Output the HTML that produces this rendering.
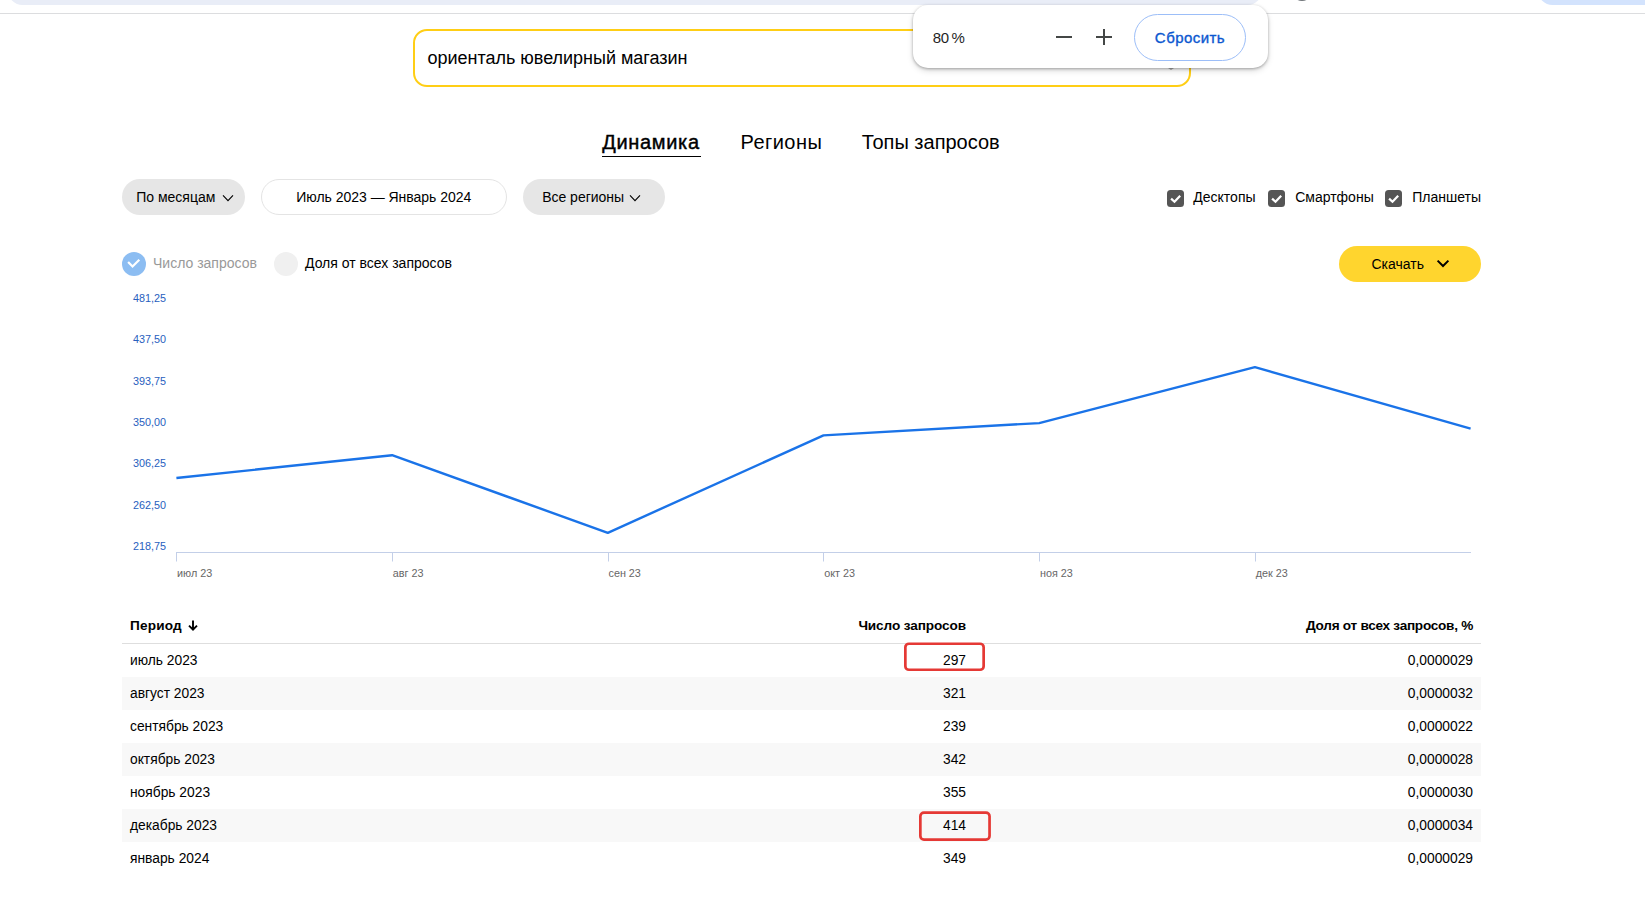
<!DOCTYPE html>
<html lang="ru">
<head>
<meta charset="utf-8">
<title>Подбор слов — ориенталь ювелирный магазин</title>
<style>
*{box-sizing:border-box;margin:0;padding:0}
html,body{width:1645px;height:898px;overflow:hidden;background:#fff}
body{position:relative;font-family:"Liberation Sans",sans-serif;color:#000}
.abs{position:absolute;white-space:nowrap}
/* browser chrome remnants */
.omnibox{left:8px;top:-24px;width:1254px;height:29px;border-radius:15px;background:#e9edf7}
.avatar{left:1292px;top:-18.6px;width:20px;height:20px;border-radius:50%;background:#70757a}
.chip{left:1538px;top:-24px;width:130px;height:28.5px;border-radius:15px;background:#d3e3fd}
.topline{left:0;top:13px;width:1645px;height:1px;background:#dcdddf}
/* search */
.search{left:413px;top:29px;width:778px;height:58px;border:2px solid #ffce15;border-radius:14px;background:#fff;
  font-size:18px;line-height:54px;padding-left:12.6px;letter-spacing:-0.02px}
/* zoom bubble */
.zoom{left:912.5px;top:5.4px;width:355px;height:63px;border-radius:15px;background:#fff;
  box-shadow:0 1px 3px rgba(0,0,0,.30),0 3px 6px rgba(0,0,0,.13)}
.zoom .pct{left:20.3px;top:.4px;font-size:15px;line-height:63.5px;color:#1f1f1f;letter-spacing:-.4px;word-spacing:-1px}
.zoom .minus{left:143.5px;top:30.5px;width:16px;height:2.6px;background:#444746}
.zoom .plus-h{left:183.5px;top:30.5px;width:16px;height:2.6px;background:#444746}
.zoom .plus-v{left:190.2px;top:23.8px;width:2.6px;height:16px;background:#444746}
.zoom .reset{left:221.5px;top:9px;width:112px;height:47px;border:1px solid #9cbef8;border-radius:24px;
  color:#0b57d0;font-size:15px;text-align:center;line-height:46.4px;-webkit-text-stroke:.35px #0b57d0;letter-spacing:.45px}
/* tabs */
.tab{font-size:20px;line-height:24px;top:130px}
.tab.active{-webkit-text-stroke:.42px #000;border-bottom:0}
.tabline{left:602px;top:156px;width:99px;height:1.4px;background:#000}
/* filter buttons */
.btn{top:179px;height:36px;border-radius:18px;background:#e6e6e6;font-size:14px;line-height:36px;letter-spacing:-.02px}
.btn.outline{background:#fff;border:1px solid #e4e4e4;line-height:34px}
.chev{display:inline-block;vertical-align:middle}
/* device checkboxes */
.cb{top:190px;width:17px;height:17px;border-radius:3.5px;background:#555}
.cbl{top:187.3px;font-size:14px;line-height:20px}
/* mode toggles */
.dot{top:252px;width:24px;height:24px;border-radius:50%}
.ml{top:253.2px;font-size:14px;line-height:20px}
/* download */
.dl{left:1339px;top:246px;width:142px;height:36px;border-radius:18px;background:#ffd52e;font-size:14px;line-height:36px}
/* table */
table{position:absolute;left:122px;top:611px;width:1359px;border-collapse:separate;border-spacing:0;table-layout:fixed;font-size:13.8px}
th{height:33px;padding-bottom:3.5px!important;font-weight:700;font-size:13.6px;text-align:right;border-bottom:1px solid #dedede;padding:0 8px;vertical-align:middle}
td{height:33px;text-align:right;padding:0 8px;vertical-align:middle;padding-top:.6px}
th:first-child,td:first-child{text-align:left}
tbody tr:nth-child(even){background:#f8f8f8}
</style>
</head>
<body>
<div class="abs omnibox"></div><div class="abs avatar"></div><div class="abs chip"></div><div class="abs topline"></div>

<div class="abs search">ориенталь ювелирный магазин</div>

<i class="abs" style="left:1167.8px;top:68.4px;width:0;height:0;border-left:3px solid transparent;border-right:3px solid transparent;border-top:2.6px solid #aaa"></i>
<div class="abs zoom">
  <span class="abs pct">80 %</span>
  <i class="abs minus"></i><i class="abs plus-h"></i><i class="abs plus-v"></i>
  <div class="abs reset">Сбросить</div>
</div>

<div class="abs tab active" style="left:602.2px;letter-spacing:.68px">Динамика</div>
<div class="abs tabline"></div>
<div class="abs tab" style="left:740.5px;letter-spacing:.45px">Регионы</div>
<div class="abs tab" style="left:861.8px;letter-spacing:0">Топы запросов</div>

<div class="abs btn" style="left:122px;width:123px;padding-left:14.3px">По месяцам<svg class="chev" style="margin-left:6.5px" width="12" height="8" viewBox="0 0 12 8"><path d="M1 1.3 6 6.6 11 1.3" fill="none" stroke="#000" stroke-width="1.1"/></svg></div>
<div class="abs btn outline" style="left:261px;width:245.6px;text-align:center">Июль 2023 — Январь 2024</div>
<div class="abs btn" style="left:523px;width:142px;padding-left:19.2px">Все регионы<svg class="chev" style="margin-left:5px" width="12" height="8" viewBox="0 0 12 8"><path d="M1 1.3 6 6.6 11 1.3" fill="none" stroke="#000" stroke-width="1.1"/></svg></div>

<div class="abs cb" style="left:1167px"><svg width="17" height="17" viewBox="0 0 17 17"><path d="M4.1 8.6 7.5 11.8 13.2 5.7" fill="none" stroke="#fff" stroke-width="2.2"/></svg></div>
<div class="abs cbl" style="left:1193.3px">Десктопы</div>
<div class="abs cb" style="left:1268px"><svg width="17" height="17" viewBox="0 0 17 17"><path d="M4.1 8.6 7.5 11.8 13.2 5.7" fill="none" stroke="#fff" stroke-width="2.2"/></svg></div>
<div class="abs cbl" style="left:1295.2px">Смартфоны</div>
<div class="abs cb" style="left:1385px"><svg width="17" height="17" viewBox="0 0 17 17"><path d="M4.1 8.6 7.5 11.8 13.2 5.7" fill="none" stroke="#fff" stroke-width="2.2"/></svg></div>
<div class="abs cbl" style="left:1412.3px">Планшеты</div>

<div class="abs dot" style="left:122px;background:#8cbdf2"><svg width="24" height="24" viewBox="0 0 24 24"><path d="M6.1 9.9 10.55 14.5 17.3 7.8" fill="none" stroke="#fff" stroke-width="2.2"/></svg></div>
<div class="abs ml" style="left:153px;color:#999">Число запросов</div>
<div class="abs dot" style="left:274px;background:#f0f0f0"></div>
<div class="abs ml" style="left:305px">Доля от всех запросов</div>

<div class="abs dl"><span class="abs" style="left:32.5px">Скачать</span><svg class="abs" style="left:97px;top:13px" width="14" height="10" viewBox="0 0 14 10"><path d="M1.6 1.6 7 7 12.4 1.6" fill="none" stroke="#000" stroke-width="2"/></svg></div>

<svg class="abs" style="left:0;top:285px" width="1645" height="310" viewBox="0 285 1645 310" font-family="Liberation Sans, sans-serif">
  <g font-size="10.8" fill="#2760be" text-anchor="end">
    <text x="166" y="301.8">481,25</text>
    <text x="166" y="343.2">437,50</text>
    <text x="166" y="384.6">393,75</text>
    <text x="166" y="426">350,00</text>
    <text x="166" y="467.4">306,25</text>
    <text x="166" y="508.8">262,50</text>
    <text x="166" y="550.2">218,75</text>
  </g>
  <path d="M176 552.5H1471M176.5 552v9.5M392.5 552v9.5M608.5 552v9.5M823.5 552v9.5M1039.5 552v9.5M1255.5 552v9.5" stroke="#c3cfe8" stroke-width="1" fill="none"/>
  <polyline points="176.4,478 392.1,455.2 607.8,532.8 823.5,435.4 1039.2,423.1 1254.9,367.2 1470.6,428.7" fill="none" stroke="#1a73e8" stroke-width="2.4" stroke-linejoin="round"/>
  <g font-size="10.8" fill="#666">
    <text x="177.1" y="576.7">июл 23</text>
    <text x="392.8" y="576.7">авг 23</text>
    <text x="608.5" y="576.7">сен 23</text>
    <text x="824.2" y="576.7">окт 23</text>
    <text x="1040" y="576.7">ноя 23</text>
    <text x="1255.7" y="576.7">дек 23</text>
  </g>
</svg>

<table>
  <colgroup><col style="width:452px"><col style="width:400px"><col style="width:507px"></colgroup>
  <thead><tr><th style="letter-spacing:.2px">Период<svg style="margin-left:6px;vertical-align:-1px" width="10" height="11" viewBox="0 0 10 11"><path d="M5 .5V9.3M1 5.6 5 9.6 9 5.6" fill="none" stroke="#000" stroke-width="1.9"/></svg></th><th style="letter-spacing:-.1px">Число запросов</th><th style="letter-spacing:-.27px">Доля от всех запросов, %</th></tr></thead>
  <tbody>
    <tr><td>июль 2023</td><td>297</td><td>0,0000029</td></tr>
    <tr><td>август 2023</td><td>321</td><td>0,0000032</td></tr>
    <tr><td>сентябрь 2023</td><td>239</td><td>0,0000022</td></tr>
    <tr><td>октябрь 2023</td><td>342</td><td>0,0000028</td></tr>
    <tr><td>ноябрь 2023</td><td>355</td><td>0,0000030</td></tr>
    <tr><td>декабрь 2023</td><td>414</td><td>0,0000034</td></tr>
    <tr><td>январь 2024</td><td>349</td><td>0,0000029</td></tr>
  </tbody>
</table>
<svg class="abs" style="left:900px;top:638px" width="100" height="210" viewBox="900 638 100 210">
  <rect x="905.35" y="643.75" width="78.3" height="26" rx="3.6" fill="none" stroke="#e53935" stroke-width="2.7"/>
  <rect x="920.35" y="812.55" width="69.2" height="27.1" rx="3.6" fill="none" stroke="#e53935" stroke-width="2.7"/>
</svg>
</body>
</html>
